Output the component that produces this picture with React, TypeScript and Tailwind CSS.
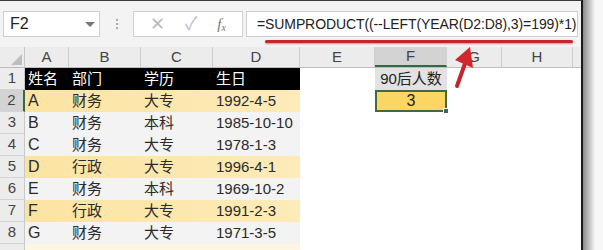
import React from "react";

// sheet data
const rows = [
  { name: "A", dept: "财务", edu: "大专", birth: "1992-4-5", hit: true },
  { name: "B", dept: "财务", edu: "本科", birth: "1985-10-10", hit: false },
  { name: "C", dept: "财务", edu: "大专", birth: "1978-1-3", hit: false },
  { name: "D", dept: "行政", edu: "大专", birth: "1996-4-1", hit: true },
  { name: "E", dept: "财务", edu: "本科", birth: "1969-10-2", hit: false },
  { name: "F", dept: "行政", edu: "大专", birth: "1991-2-3", hit: true },
  { name: "G", dept: "财务", edu: "大专", birth: "1971-3-5", hit: false },
];

const cols = [
  { key: "A", w: "w-[44px]" },
  { key: "B", w: "w-[72px]" },
  { key: "C", w: "w-[72px]" },
  { key: "D", w: "w-[87px]" },
  { key: "E", w: "w-[75px]" },
  { key: "F", w: "w-[72px]" },
  { key: "G", w: "w-[55px]" },
  { key: "H", w: "w-[71px]" },
];

const font = "font-['Liberation_Sans','Noto_Sans_CJK_SC',sans-serif]";

const RowHead = ({ n, active }: { n: number; active?: boolean }) => (
  <div
    className={`w-[25px] h-full flex items-center justify-center text-[15px] text-[#444] border-b border-[#d4d4d4] ${
      active ? "bg-[#d3d3d3] border-r-2 border-r-[#2e6b45]" : "bg-[#ececec] border-r border-r-[#c8c8c8]"
    }`}
  >
    {n}
  </div>
);

const App = () => {
  return (
    <div className={`relative w-[603px] h-[250px] bg-[#f7f7f7] overflow-hidden ${font}`}>
      <div className="flex h-full">
        <div className="w-[583px] h-full border-t border-[#3a3a3a] border-r-2 border-r-[#1a1a1a] bg-white flex flex-col">
          {/* formula bar */}
          <div className="h-[46px] bg-[#f3f3f3] flex items-center px-[3px]">
            <div className="w-[97px] h-[26px] bg-white border border-[#d0d0d0] flex items-center justify-between pl-[6px] pr-[4px]">
              <span className="text-[16px] text-[#222]">F2</span>
              <span className="w-0 h-0 border-l-[5px] border-r-[5px] border-t-[5px] border-l-transparent border-r-transparent border-t-[#777]" />
            </div>
            <div className="w-[33px] flex flex-col items-center gap-[2px]">
              <span className="w-[2px] h-[2px] bg-[#aaa]" />
              <span className="w-[2px] h-[2px] bg-[#aaa]" />
              <span className="w-[2px] h-[2px] bg-[#aaa]" />
            </div>
            <div className="w-[110px] h-[26px] bg-white border border-[#d0d0d0] flex items-center justify-around px-[6px] text-[#bcbcbc]">
              <span className="text-[18px] leading-none">✕</span>
              <span className="text-[18px] leading-none">✓</span>
              <span className="text-[15px] italic font-['Liberation_Serif',serif] text-[#777]">
                f<sub className="text-[10px]">x</sub>
              </span>
            </div>
            <div className="ml-[3px] w-[332px] h-[26px] bg-white border border-[#d0d0d0] flex items-center pl-[10px] text-[14px] text-[#222] whitespace-nowrap tracking-[-0.1px]">
              =SUMPRODUCT((--LEFT(YEAR(D2:D8),3)=199)*1)
            </div>
          </div>

          {/* column headers */}
          <div className="flex h-[21px] bg-[#ececec] border-b border-[#bdbdbd]">
            <div className="w-[25px] h-full flex items-end justify-end p-[2px] border-r border-[#c8c8c8]">
              <svg width="11" height="11" viewBox="0 0 11 11">
                <path d="M11 0 L11 11 L0 11 Z" fill="#bdbdbd" />
              </svg>
            </div>
            {cols.map((c) => (
              <div
                key={c.key}
                className={`${c.w} h-full flex items-center justify-center text-[15px] text-[#444] border-r border-[#cfcfcf] ${
                  c.key === "F" ? "bg-[#d3d3d3] border-b-2 border-b-[#2e6b45]" : ""
                }`}
              >
                {c.key}
              </div>
            ))}
          </div>

          {/* row 1 */}
          <div className="flex h-[22px]">
            <RowHead n={1} />
            <div className="flex bg-black text-white text-[15px]">
              <div className="w-[44px] pl-[3px] flex items-center">姓名</div>
              <div className="w-[72px] pl-[3px] flex items-center">部门</div>
              <div className="w-[72px] pl-[3px] flex items-center">学历</div>
              <div className="w-[87px] pl-[3px] flex items-center">生日</div>
            </div>
            <div className="w-[75px]" />
            <div className="w-[72px] bg-[#e2e2e2] flex items-center justify-center text-[15px] text-[#222]">
              90后人数
            </div>
          </div>

          {rows.map((r, i) => (
            <div key={r.name} className="flex h-[22px]">
              <RowHead n={i + 2} active={i === 0} />
              <div
                className={`flex text-[15px] text-[#2a2a2a] ${
                  r.hit ? "bg-gradient-to-r from-[#fbe3a2] to-[#fdebb8]" : "bg-[#f3f3f3]"
                }`}
              >
                <div className="w-[44px] pl-[3px] flex items-center text-[16px]">{r.name}</div>
                <div className="w-[72px] pl-[3px] flex items-center">{r.dept}</div>
                <div className="w-[72px] pl-[3px] flex items-center">{r.edu}</div>
                <div className="w-[87px] pl-[3px] flex items-center">{r.birth}</div>
              </div>
              <div className="w-[75px]" />
              {i === 0 && (
                <div className="relative w-[72px] bg-[#fcd662] border-2 border-[#3f6a42] flex items-center justify-center text-[16px] text-[#222]">
                  3
                  <span className="absolute right-[-4px] bottom-[-4px] w-[6px] h-[6px] bg-[#3f6a42] border border-white" />
                </div>
              )}
            </div>
          ))}
          <div className="flex flex-1">
            <div className="w-[25px] bg-[#ececec] border-r border-[#c8c8c8]" />
            <div className="w-[275px] bg-[#fdf6e2]" />
          </div>
        </div>
        {/* shadow on the right */}
        <div className="w-[12px] h-full bg-gradient-to-r from-[#8a8a8a] to-[#f7f7f7]" />
      </div>

      {/* red underline under the formula */}
      <div className="absolute left-[265px] top-[40px] w-[308px] h-[3px] bg-[#c3262c] rounded-full shadow-[0_1px_2px_rgba(120,0,0,0.4)]" />

      {/* red arrow */}
      <svg className="absolute left-[448px] top-[44px]" width="34" height="46" viewBox="0 0 34 46">
        <path d="M9 42 L19 14" stroke="#c3262c" strokeWidth="4" strokeLinecap="round" />
        <path d="M22 3 L25 24 L7 16 Z" fill="#d1262c" />
      </svg>
    </div>
  );
};

export default App;
